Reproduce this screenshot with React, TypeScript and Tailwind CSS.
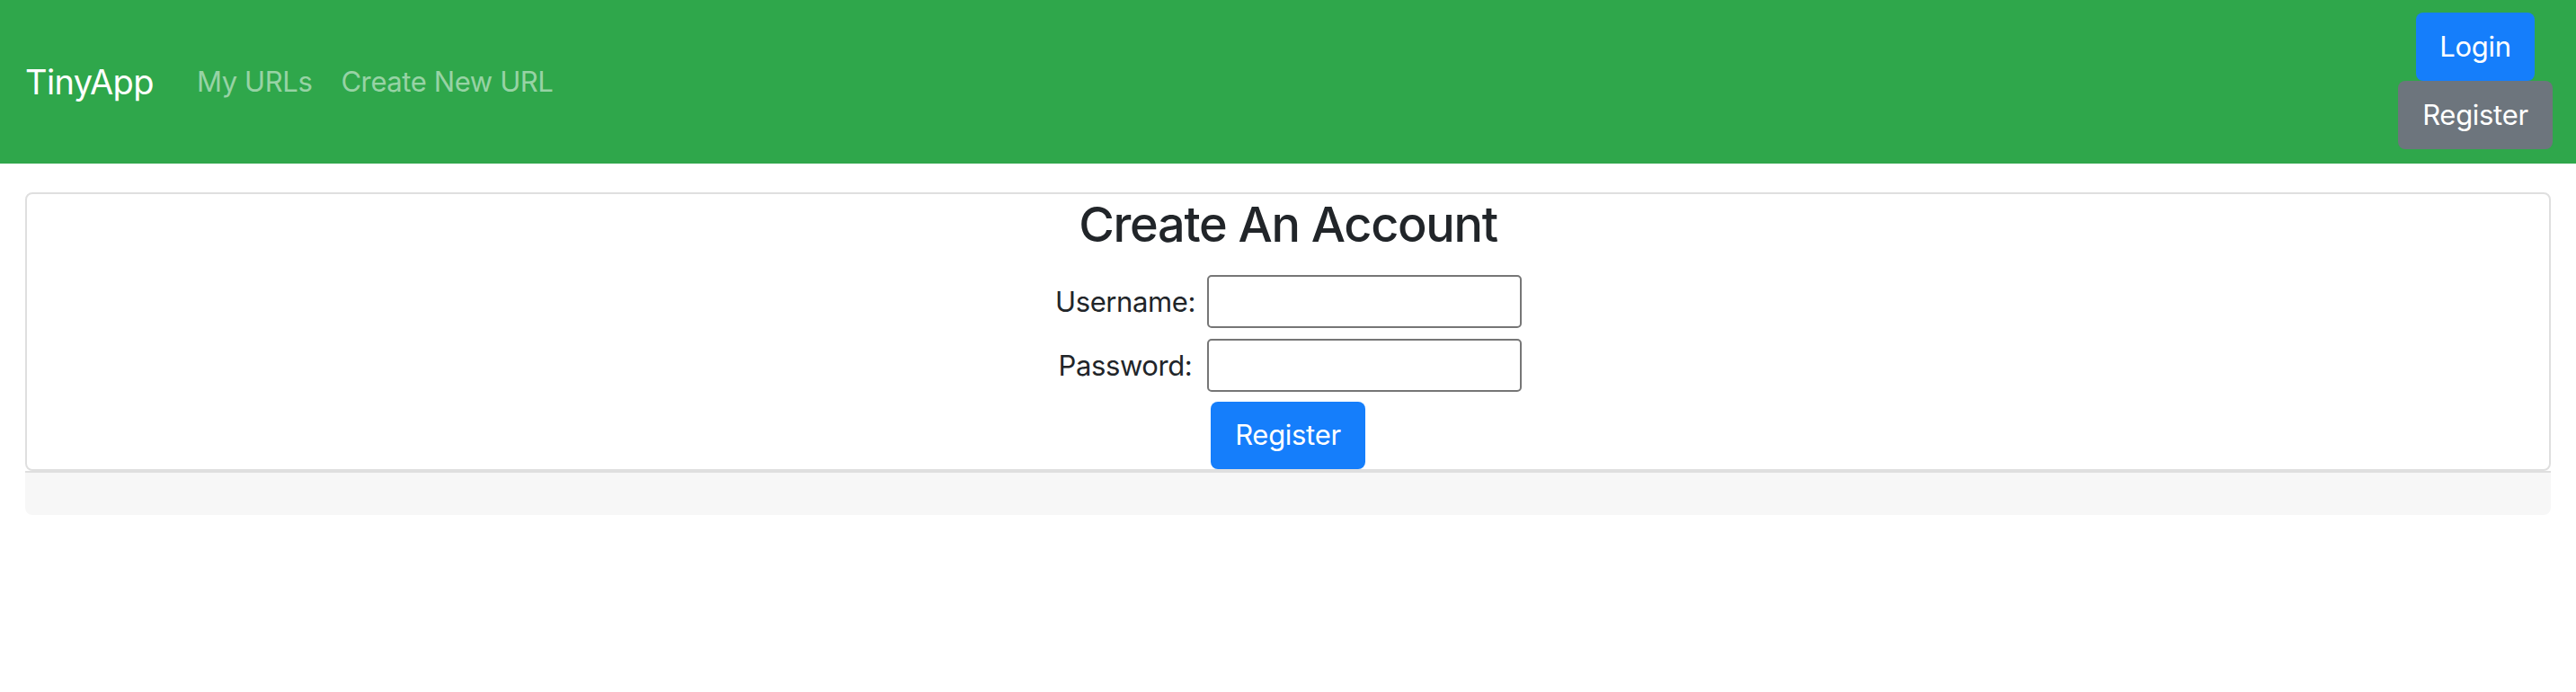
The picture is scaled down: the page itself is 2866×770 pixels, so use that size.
import React from "react";

export default function App() {
  return (
    <div className="min-h-[770px] bg-white font-['Inter',sans-serif] text-[#212529]">
      <nav className="flex h-[182px] items-center justify-between bg-[#2fa74b] pl-[28px] pr-[26px]">
        <div className="flex items-center">
          <a className="mr-[32px] text-[38px] leading-[60px] tracking-[-0.6px] text-white" href="#">
            TinyApp
          </a>
          <a className="px-[16px] text-[31px] leading-[48px] tracking-[-0.4px] text-white/50" href="#">
            My URLs
          </a>
          <a className="px-[16px] text-[31px] leading-[48px] tracking-[-0.4px] text-white/50" href="#">
            Create New URL
          </a>
        </div>
        <div className="flex flex-col items-center pb-[2px]">
          <button className="flex h-[76px] w-[132px] items-center justify-center rounded-[8px] bg-[#157efb] text-[31px] tracking-[-0.3px] text-white">
            Login
          </button>
          <button className="flex h-[76px] w-[172px] items-center justify-center rounded-[8px] bg-[#6d757d] text-[31px] tracking-[-0.3px] text-white">
            Register
          </button>
        </div>
      </nav>
      <main className="px-[28px] pt-[32px]">
        <div className="rounded-[8px] border-2 border-[#dfdfdf]">
          <h3 className="mb-[23px] text-center text-[54px] font-medium leading-[67px] tracking-[-1.3px]">
            Create An Account
          </h3>
          <form className="flex flex-col items-center">
            <div className="grid grid-cols-[157px_350px] items-center gap-x-[12px] gap-y-[12px]">
              <label className="text-center text-[31px] leading-[48px] tracking-[-0.4px]">Username:</label>
              <input
                type="text"
                className="h-[59px] w-[350px] rounded-[5px] border-2 border-[#767676] bg-white"
              />
              <label className="text-center text-[31px] leading-[48px] tracking-[-0.4px]">Password:</label>
              <input
                type="password"
                className="h-[59px] w-[350px] rounded-[5px] border-2 border-[#767676] bg-white"
              />
            </div>
            <button
              type="button"
              className="mt-[11px] flex h-[75px] w-[172px] items-center justify-center rounded-[8px] bg-[#157efb] text-[31px] tracking-[-0.3px] text-white"
            >
              Register
            </button>
          </form>
        </div>
        <div className="h-[49px] rounded-b-[8px] border-t-2 border-[#dfdfdf] bg-[#f7f7f7]" />
      </main>
    </div>
  );
}
